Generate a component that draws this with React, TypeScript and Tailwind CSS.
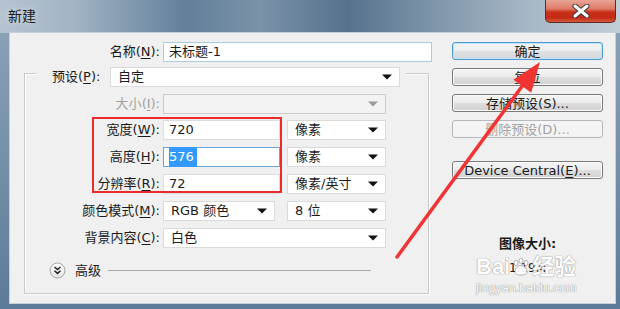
import React from "react";

const Arrow = ({ gray }: { gray?: boolean }) => (
  <svg width="10" height="6" viewBox="0 0 10 6" className="shrink-0">
    <path d="M0 0.5h10L5 5.5z" fill={gray ? "#9b9b9b" : "#111"} />
  </svg>
);

function Label({ cn, k, className }: { cn: string; k: string; className?: string }) {
  return (
    <span className={className}>
      {cn}(<u className="underline-offset-2">{k}</u>):
    </span>
  );
}

function Select({ text, className }: { text: string; className: string }) {
  return (
    <div
      className={
        "flex h-[20px] items-center justify-between border border-[#dadada] bg-white pl-[7px] pr-[7px] " +
        className
      }
    >
      <span>{text}</span>
      <Arrow />
    </div>
  );
}

function Btn({ children, primary, disabled }: { children: React.ReactNode; primary?: boolean; disabled?: boolean }) {
  let cls =
    "flex h-[18px] items-center justify-center rounded-[3px] border leading-none text-[13px] ";
  if (disabled) {
    cls += "border-[#b5b9bc] bg-[#f4f4f4] text-[#a3a3a3]";
  } else if (primary) {
    cls +=
      "border-[#4d9ad3] bg-[linear-gradient(#f4f6f7_0%,#ebedee_49%,#dfe2e4_50%,#d4d7d9_100%)] shadow-[inset_0_0_0_1px_#bfe4fa]";
  } else {
    cls +=
      "border-[#7a7a7a] bg-[linear-gradient(#f4f4f4_0%,#ececec_49%,#dedede_50%,#d2d2d2_100%)] shadow-[inset_0_0_0_1px_#fbfbfb]";
  }
  return <div className={cls}>{children}</div>;
}

export default function App() {
  return (
    <div className="relative flex h-[309px] w-[620px] flex-col overflow-hidden bg-[linear-gradient(180deg,#8fa5b9,#5c7b99)] font-['DejaVu_Sans','Noto_Sans_CJK_SC',sans-serif] text-[13px] text-[#1b1b1b]">
      {/* title bar */}
      <div className="flex h-[33px] shrink-0 items-start justify-between bg-[linear-gradient(90deg,#b6c4d1_0%,#a2b3c4_12%,#62809b_30%,#7a92a8_42%,#56728d_56%,#7e95aa_70%,#a6b6c5_85%,#c2cdd7_100%)]">
        <span className="ml-[8px] mt-[8px] text-[14px] leading-[16px] text-[#1a1a1a] [text-shadow:0_0_6px_#dfe7ee]">
          新建
        </span>
        <div className="mr-[4px] flex h-[23px] w-[71px] items-center justify-center rounded-b-[5px] border border-t-0 border-[#5e2a22] bg-[linear-gradient(180deg,#e9a597_0%,#df7a66_40%,#c9301b_55%,#c42a13_80%,#d55a3c_100%)]">
          <svg width="22" height="14" viewBox="0 0 22 14">
            <path d="M5 2l12 10M17 2L5 12" stroke="#3b3b3b" strokeWidth="5" strokeLinecap="round" />
            <path d="M5 2l12 10M17 2L5 12" stroke="#fff" strokeWidth="3" strokeLinecap="round" />
          </svg>
        </div>
      </div>

      {/* body */}
      <div className="ml-[10px] mr-[5px] flex h-[270px] bg-[#f0f0f0] shadow-[0_0_0_1px_#c5d0da]">
        {/* left column */}
        <div className="w-[442px] shrink-0 pt-[9px]">
          <div className="flex h-[20px] items-center">
            <div className="w-[150px] text-right">
              <Label cn="名称" k="N" />
            </div>
            <div className="ml-[3px] flex h-[20px] w-[269px] items-center border border-[#a9cbe6] bg-white pl-[5px]">
              未标题-1
            </div>
          </div>

          {/* group box */}
          <div className="ml-[14px] mt-[11px] h-[221px] w-[405px] border border-[#c9c9c9] shadow-[inset_1px_1px_0_#fff,1px_1px_0_#fff]">
            <div className="-mt-[7px] ml-[11px] flex w-fit items-center bg-[#f0f0f0] pl-[16px] pr-[6px]">
              <Label cn="预设" k="P" className="w-[58px] shrink-0" />
              <Select text="自定" className="w-[290px]" />
            </div>

            <div className="mt-[7px] flex items-center">
              <div className="w-[135px] text-right text-[#a2a2a2]">
                <Label cn="大小" k="I" />
              </div>
              <div className="ml-[3px] flex h-[20px] w-[223px] items-center justify-end border border-[#cdcdcd] bg-[#f3f3f3] pr-[7px]">
                <Arrow gray />
              </div>
            </div>

            <div className="mt-[6px] flex items-center">
              <div className="w-[135px] text-right">
                <Label cn="宽度" k="W" />
              </div>
              <div className="ml-[3px] flex h-[20px] w-[117px] items-center border border-[#d9dde2] bg-white pl-[5px]">
                720
              </div>
              <Select text="像素" className="ml-[7px] w-[99px]" />
            </div>

            <div className="mt-[7px] flex items-center">
              <div className="w-[135px] text-right">
                <Label cn="高度" k="H" />
              </div>
              <div className="ml-[3px] flex h-[20px] w-[117px] items-center border border-[#6aa6dd] bg-white pl-[5px]">
                <span className="bg-[#3399ff] pr-[3px] text-white">576</span>
              </div>
              <Select text="像素" className="ml-[7px] w-[99px]" />
            </div>

            <div className="mt-[7px] flex items-center">
              <div className="w-[135px] text-right">
                <Label cn="分辨率" k="R" />
              </div>
              <div className="ml-[3px] flex h-[20px] w-[117px] items-center border border-[#d9dde2] bg-white pl-[5px]">
                72
              </div>
              <Select text="像素/英寸" className="ml-[7px] w-[99px]" />
            </div>

            <div className="mt-[7px] flex items-center">
              <div className="w-[135px] text-right">
                <Label cn="颜色模式" k="M" />
              </div>
              <Select text="RGB 颜色" className="ml-[3px] w-[112px]" />
              <Select text="8 位" className="ml-[12px] w-[99px]" />
            </div>

            <div className="mt-[7px] flex items-center">
              <div className="w-[135px] text-right">
                <Label cn="背景内容" k="C" />
              </div>
              <Select text="白色" className="ml-[3px] w-[223px]" />
            </div>

            <div className="mt-[13px] flex items-center pl-[24px]">
              <svg width="17" height="17" viewBox="0 0 17 17" className="shrink-0">
                <defs>
                  <linearGradient id="adv" x1="0" y1="0" x2="0" y2="1">
                    <stop offset="0" stopColor="#ffffff" />
                    <stop offset="1" stopColor="#e4e4e4" />
                  </linearGradient>
                </defs>
                <circle cx="8.5" cy="8.5" r="7.5" fill="url(#adv)" stroke="#a4a4a4" />
                <path d="M5.5 5l3 2.6 3-2.6M5.5 8.8l3 2.6 3-2.6" fill="none" stroke="#222" strokeWidth="1.5" />
              </svg>
              <span className="ml-[9px]">高级</span>
              <div className="ml-[7px] h-[2px] w-[263px] border-t border-[#a9a9a9] border-b-white" />
            </div>
          </div>
        </div>

        {/* right column */}
        <div className="flex w-[151px] shrink-0 flex-col pt-[9px]">
          <div className="flex flex-col gap-[8px]">
            <Btn primary>确定</Btn>
            <Btn>复位</Btn>
            <Btn>存储预设(S)...</Btn>
            <Btn disabled>删除预设(D)...</Btn>
          </div>
          <div className="mt-[23px]">
            <Btn>
              Device Central(<u className="underline-offset-2">E</u>)...
            </Btn>
          </div>
          <div className="mt-[57px] text-center font-bold leading-[16px]">图像大小:</div>
          <div className="mt-[9px] text-center text-[12px] leading-[14px]">1.19M</div>
        </div>
      </div>

      {/* annotation: red box */}
      <div className="pointer-events-none absolute left-[92px] top-[117px] h-[76px] w-[190px] border-2 border-[#ee2b2b]" />

      {/* watermark */}
      <div className="pointer-events-none absolute left-[476px] top-[255px] flex flex-col text-white opacity-90 [text-shadow:0_0_1px_#8a8a8a,0_0_1px_#8a8a8a]">
        <div className="flex items-center font-['Liberation_Sans','Noto_Sans_CJK_SC',sans-serif] text-[22px] font-bold leading-[24px]">
          <span>Bai</span>
          <svg width="20" height="20" viewBox="0 0 20 20" className="mx-[1px]">
            <g fill="#fff" stroke="#9a9a9a" strokeWidth="0.8">
              <ellipse cx="5" cy="6" rx="2" ry="2.6" />
              <ellipse cx="10" cy="3.8" rx="2" ry="2.6" />
              <ellipse cx="15" cy="6" rx="2" ry="2.6" />
              <path d="M4 15c0-4 3-6.5 6-6.5s6 2.5 6 6.5c0 2-2 3-6 3s-6-1-6-3z" />
            </g>
          </svg>
          <span>经验</span>
        </div>
        <div className="mt-[2px] font-['Liberation_Sans',sans-serif] text-[12.5px] leading-[14px]">jingyan.baidu.com</div>
      </div>

      {/* annotation: red arrow */}
      <svg
        className="pointer-events-none absolute left-0 top-0"
        width="620"
        height="309"
        viewBox="0 0 620 309"
      >
        <line x1="397" y1="257" x2="523" y2="85" stroke="#f03434" strokeWidth="3.5" strokeLinecap="round" />
        <polygon points="540,62 531.2,92.8 513.4,79.8" fill="#f03434" />
      </svg>
    </div>
  );
}
